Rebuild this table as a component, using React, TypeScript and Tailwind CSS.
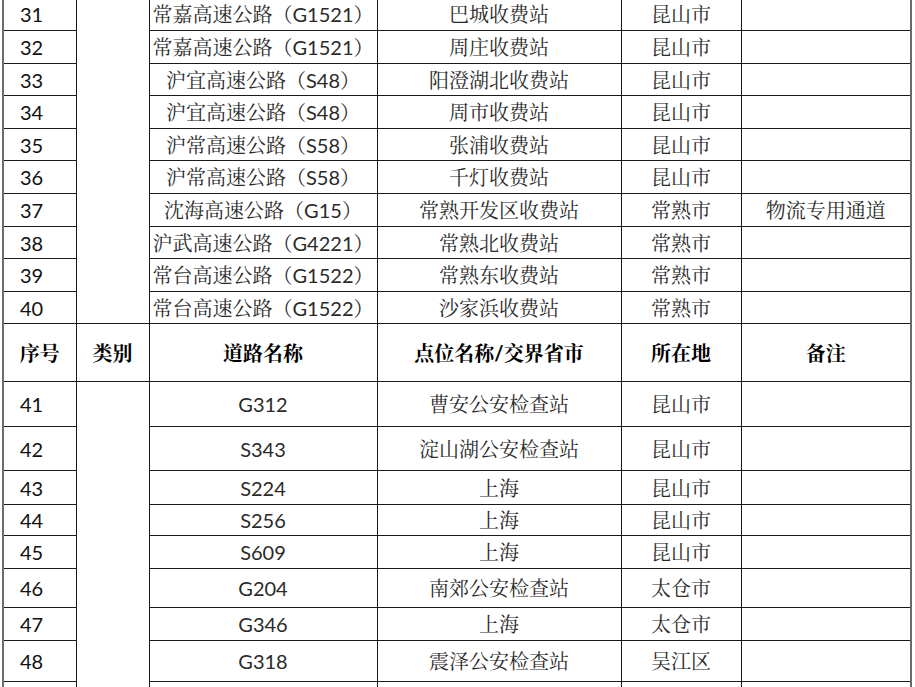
import React from "react";

const upper: [number, string, string, string, string, number][] = [
  [31, "常嘉高速公路（G1521）", "巴城收费站", "昆山市", "", 33],
  [32, "常嘉高速公路（G1521）", "周庄收费站", "昆山市", "", 33],
  [33, "沪宜高速公路（S48）", "阳澄湖北收费站", "昆山市", "", 32],
  [34, "沪宜高速公路（S48）", "周市收费站", "昆山市", "", 33],
  [35, "沪常高速公路（S58）", "张浦收费站", "昆山市", "", 32],
  [36, "沪常高速公路（S58）", "千灯收费站", "昆山市", "", 33],
  [37, "沈海高速公路（G15）", "常熟开发区收费站", "常熟市", "物流专用通道", 33],
  [38, "沪武高速公路（G4221）", "常熟北收费站", "常熟市", "", 32],
  [39, "常台高速公路（G1522）", "常熟东收费站", "常熟市", "", 33],
  [40, "常台高速公路（G1522）", "沙家浜收费站", "常熟市", "", 32],
];

const lower: [number | null, string, string, string, string, number][] = [
  [41, "G312", "曹安公安检查站", "昆山市", "", 45],
  [42, "S343", "淀山湖公安检查站", "昆山市", "", 44],
  [43, "S224", "上海", "昆山市", "", 34],
  [44, "S256", "上海", "昆山市", "", 31],
  [45, "S609", "上海", "昆山市", "", 33],
  [46, "G204", "南郊公安检查站", "太仓市", "", 39],
  [47, "G346", "上海", "太仓市", "", 33],
  [48, "G318", "震泽公安检查站", "吴江区", "", 41],
  [null, "", "", "", "", 40],
];

const cell = "border border-[#1a1a1a] p-0 align-middle";
const cjk = "text-[#2a2a2a] text-[20px] leading-none";

const Row = ({
  row,
  first,
  span,
}: {
  row: [number | null, string, string, string, string, number];
  first: boolean;
  span: number;
}) => {
  const [no, road, point, place, note, h] = row;
  return (
    <tr style={{ height: h }}>
      <td className={`${cell} pl-[16px] text-left text-[20px] text-[#111]`}>
        {no}
      </td>
      {first && <td rowSpan={span} className={cell}></td>}
      <td className={`${cell} ${cjk} text-center`}>{road}</td>
      <td className={`${cell} ${cjk} text-center`}>{point}</td>
      <td className={`${cell} ${cjk} text-center`}>{place}</td>
      <td className={`${cell} ${cjk} text-center border-r-2 border-r-[#6b6b6b]`}>
        {note}
      </td>
    </tr>
  );
};

export default function App() {
  return (
    <div
      className="h-[687px] w-[915px] overflow-hidden bg-white"
      style={{
        fontFamily:
          'Lato, "Noto Serif CJK SC", "Noto Sans CJK SC", sans-serif',
      }}
    >
      <table className="ml-[2px] mt-[-3px] table-fixed border-collapse border-l-2 border-l-[#6b6b6b]">
        <colgroup>
          <col className="w-[73px]" />
          <col className="w-[73px]" />
          <col className="w-[228px]" />
          <col className="w-[244px]" />
          <col className="w-[120px]" />
          <col className="w-[170px]" />
        </colgroup>
        <tbody>
          {upper.map((r, i) => (
            <Row key={r[0]} row={r} first={i === 0} span={upper.length} />
          ))}
          <tr className="h-[58px] text-[20px] font-bold text-black">
            <td className={`${cell} text-center`}>序号</td>
            <td className={`${cell} text-center`}>类别</td>
            <td className={`${cell} text-center`}>道路名称</td>
            <td className={`${cell} text-center`}>点位名称/交界省市</td>
            <td className={`${cell} text-center`}>所在地</td>
            <td className={`${cell} text-center border-r-2 border-r-[#6b6b6b]`}>
              备注
            </td>
          </tr>
          {lower.map((r, i) => (
            <Row key={i} row={r} first={i === 0} span={lower.length} />
          ))}
        </tbody>
      </table>
    </div>
  );
}
